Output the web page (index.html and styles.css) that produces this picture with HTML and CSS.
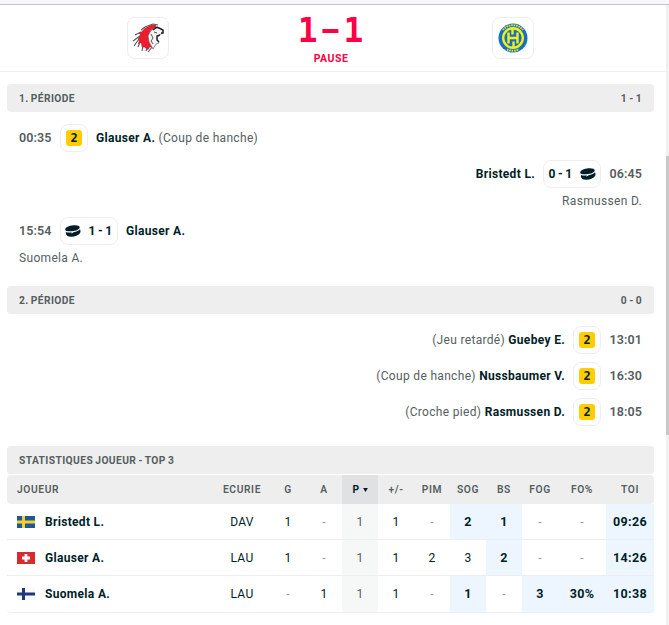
FILE: index.html
```html
<!DOCTYPE html>
<html lang="fr">
<head>
<meta charset="utf-8">
<title>Match</title>
<link rel="stylesheet" href="styles.css">
</head>
<body>
<svg width="0" height="0" class="defs" aria-hidden="true">
  <symbol id="puck" viewBox="0 0 16 12">
    <path d="M.2 4.700C.2 2.200 4 .6 8.500.2c3.600-.3 6.200.6 6.200 2.100 0 2.100-3.700 3.700-8 4C2.800 6.500.2 6 .2 4.700z"/>
    <path d="M.9 7c1.400.6 3.700.6 6 .4l-.8 1.400 2.500-1.600c2.900-.5 5.200-1.600 6.400-3 .8 1.300.6 3.200-.3 4.400-1.500 1.900-4.600 3-8.100 3.200-3.400.2-5-1-5.700-2.700z"/>
  </symbol>
</svg>
<div class="window-edge"></div>
<div class="layout">
<main>
  <header class="match">
    <div class="logo">
      <svg viewBox="0 0 32 32" width="32" height="32">
        <path d="M9 10l4-4 6-3 5 0 0 3-5 2-2 5 1 6 4 7-4-1-2 3-4-3-2 1-1-5-3 1 1-4-1-2 2-3-1-2z" fill="#ed1c2e"/>
        <path d="M9 8l4-3 8-3M3 13l6-3M1 19l7-5M2 24l5-7M6 25l2-5M10 29l1-5M14 29l1-3M21 24l-5 6M23 21l-3 5M21 2l5 1" fill="none" stroke="#555" stroke-width="1.100"/>
        <path d="M18 10l4-4 6 0 3 2v3l-4 2-2 3 2 5-3 1-3 5-4-7-1-6z" fill="#f4f4f4" stroke="#666" stroke-width=".7"/>
        <path d="M21 8l4-3 6 3v3h-2M28 13l-3 1 0 4 2 2" fill="none" stroke="#222" stroke-width="1.400"/>
        <path d="M19 12l2 4-2 3 2 3M22 10l3 1" fill="none" stroke="#555" stroke-width="1"/>
      </svg>
    </div>
    <div class="result">
      <div class="score"><span>1</span><span class="dash">-</span><span>1</span></div>
      <div class="status">PAUSE</div>
    </div>
    <div class="logo">
      <svg viewBox="0 0 32 32" width="32" height="32">
        <circle cx="16" cy="16" r="14.500" fill="#1670c4"/>
        <path d="M6 8a12.800 12.800 0 0 1 20 0M10 27.300a12.800 12.800 0 0 0 12 0" fill="none" stroke="#d8dc3c" stroke-width="2" stroke-dasharray="1.600 .8"/>
        <circle cx="16" cy="16" r="9.800" fill="#1670c4" stroke="#f5ee18" stroke-width="2.400"/>
        <path d="M11.500 10.500v11M20.500 10.500v11M11.500 16h9M15.500 6v6.500M16.500 26v-6.500" fill="none" stroke="#f5ee18" stroke-width="2.400"/>
      </svg>
    </div>
  </header>

  <div class="content">
    <section>
      <h2 class="bar"><span>1. PÉRIODE</span><span>1 - 1</span></h2>
      <div class="events">
        <div class="event">
          <time>00:35</time><span class="box"><i class="penalty">2</i></span>
          <span class="text"><b>Glauser A.</b> (Coup de hanche)</span>
        </div>
        <div class="event away">
          <time>06:45</time><span class="box goal"><svg class="puck"><use href="#puck"/></svg><b>0 - 1</b></span>
          <span class="text"><b>Bristedt L.</b></span>
        </div>
        <div class="assist away">Rasmussen D.</div>
        <div class="event">
          <time>15:54</time><span class="box goal"><svg class="puck"><use href="#puck"/></svg><b>1 - 1</b></span>
          <span class="text"><b>Glauser A.</b></span>
        </div>
        <div class="assist">Suomela A.</div>
      </div>
    </section>

    <section>
      <h2 class="bar"><span>2. PÉRIODE</span><span>0 - 0</span></h2>
      <div class="events">
        <div class="event away">
          <time>13:01</time><span class="box"><i class="penalty">2</i></span>
          <span class="text">(Jeu retardé) <b>Guebey E.</b></span>
        </div>
        <div class="event away">
          <time>16:30</time><span class="box"><i class="penalty">2</i></span>
          <span class="text">(Coup de hanche) <b>Nussbaumer V.</b></span>
        </div>
        <div class="event away">
          <time>18:05</time><span class="box"><i class="penalty">2</i></span>
          <span class="text">(Croche pied) <b>Rasmussen D.</b></span>
        </div>
      </div>
    </section>

    <section>
      <h2 class="bar stats-title"><span>STATISTIQUES JOUEUR - TOP 3</span></h2>
      <div class="stats">
        <div class="row head">
          <span class="player">JOUEUR</span><span>ECURIE</span><span>G</span><span>A</span><span class="sorted">P<svg class="arrow" viewBox="0 0 6 5"><path d="M0 0h6L3 5z"/></svg></span><span>+/-</span><span>PIM</span><span>SOG</span><span>BS</span><span>FOG</span><span>FO%</span><span>TOI</span>
        </div>
        <div class="row">
          <span class="player"><svg class="flag" viewBox="0 0 18 12"><path fill="#1b5a94" d="M0 0h18v12H0z"/><path fill="#f8cd2d" d="M5 0h3v12H5zM0 4.500h18v3H0z"/></svg><b>Bristedt L.</b></span><span>DAV</span><span>1</span><span class="none">-</span><span class="sorted">1</span><span>1</span><span class="none">-</span><span class="best">2</span><span class="best">1</span><span class="none">-</span><span class="none">-</span><span class="best">09:26</span>
        </div>
        <div class="row">
          <span class="player"><svg class="flag" viewBox="0 0 18 12"><path fill="#d92a2f" d="M0 0h18v12H0z"/><path fill="#fff" d="M7.600 2h2.800v2.600H13v2.800h-2.600V10H7.600V7.400H5V4.600h2.600z"/></svg><b>Glauser A.</b></span><span>LAU</span><span>1</span><span class="none">-</span><span class="sorted">1</span><span>1</span><span>2</span><span>3</span><span class="best">2</span><span class="none">-</span><span class="none">-</span><span class="best">14:26</span>
        </div>
        <div class="row">
          <span class="player"><svg class="flag" viewBox="0 0 18 12"><path fill="#f8f8fa" d="M0 0h18v12H0z"/><path fill="#20387a" d="M5 0h3v12H5zM0 4.500h18v3H0z"/></svg><b>Suomela A.</b></span><span>LAU</span><span class="none">-</span><span>1</span><span class="sorted">1</span><span>1</span><span class="none">-</span><span class="best">1</span><span class="none">-</span><span class="best">3</span><span class="best">30%</span><span class="best">10:38</span>
        </div>
      </div>
    </section>
  </div>
</main>
<aside class="scrollbar"><div class="thumb"></div></aside>
</div>
</body>
</html>
```

FILE: styles.css
```css
* { box-sizing: border-box; }
body {
  margin: 0;
  height: 625px;
  overflow: hidden;
  background: #fff;
  color: #001e28;
  font: 12px/18px Roboto, "Liberation Sans", sans-serif;
  letter-spacing: .32px;
}
.defs { display: block; height: 0; }
.window-edge { height: 5px; background: #f6f7f9; border-bottom: 1px solid #c4c4c8; }
.layout { display: flex; height: 620px; }
main { flex: 1; min-width: 0; }
.scrollbar { width: 3px; background: #f1f1f1; padding-top: 151px; }
.thumb { height: 279px; background: #c8c8c8; }

.match {
  display: grid;
  grid-template-columns: 296px 70px 300px;
  height: 67px;
  padding-top: 12px;
  border-bottom: 1px solid #eee;
}
.logo {
  display: grid;
  place-items: center;
  width: 42px;
  height: 42px;
  border: 1px solid #eee;
  border-radius: 8px;
  justify-self: center;
}
.match .logo:last-child { justify-self: start; margin-left: 126px; }
.result { color: #ff0046; text-align: center; white-space: nowrap; }
.score {
  display: flex;
  justify-content: center;
  gap: 7.5px;
  font: bold 33px/27px "DejaVu Sans Mono", monospace;
  letter-spacing: 0;
  margin: 0 0 0 -1px;
}
.dash {
  font-family: "Liberation Sans", sans-serif;
  line-height: 24px;
  transform: scaleX(1.9);
}
.status { font-size: 10.5px; font-weight: 700; line-height: 14px; letter-spacing: .5px; margin-top: 8px; }

.content { padding: 12px 12px 0 7px; }
.bar {
  display: flex;
  justify-content: space-between;
  align-items: center;
  height: 28px;
  margin: 0;
  padding: 1px 12px 0;
  border-radius: 4px;
  background: #eee;
  color: #555e61;
  font-size: 10.25px;
  font-weight: 700;
  line-height: 14px;
  letter-spacing: .4px;
  word-spacing: -.8px;
}
.events { padding: 8px 12px 16px; color: #555e61; }
.event { display: flex; align-items: center; height: 36px; }
.event.away { flex-direction: row-reverse; }
.event time { width: 33px; font-size: 12.5px; font-weight: 600; white-space: nowrap; letter-spacing: .1px; }
.away time { text-align: right; }
.box {
  display: flex;
  align-items: center;
  justify-content: center;
  width: 28px;
  height: 28px;
  margin: 0 8px;
  border: 1px solid #eee;
  border-radius: 8px;
  color: #001e28;
  white-space: nowrap;
}
.goal { width: 58px; gap: 7px; }
.goal b { word-spacing: -1px; }
.away .goal { flex-direction: row-reverse; }
.puck { width: 16px; height: 12px; fill: #001e28; }
.penalty {
  width: 16px;
  height: 16px;
  border-radius: 3px;
  background: #ffcd00;
  font: bold 12px/16px "DejaVu Sans Mono", monospace;
  letter-spacing: 0;
  text-align: center;
}
.text b, .player b { color: #001e28; font-weight: 700; }
.assist { height: 18px; margin-bottom: 3px; }
.assist.away { text-align: right; }

.stats-title { margin-bottom: 1px; }
.row {
  display: grid;
  grid-template-columns: 207px 56px repeat(7, 36px) 36px 48px 48px;
  height: 36px;
  border-bottom: 1px solid #eee;
}
.row:last-child { height: 37px; border-radius: 0 0 4px 4px; }
.row > span { display: flex; align-items: center; justify-content: center; }
.row > .player { justify-content: flex-start; padding-left: 10px; }
.row > .best { background: #edf6ff; font-size: 12.5px; font-weight: 700; }
.row.head {
  height: 29px;
  border: 0;
  border-radius: 4px;
  background: #eee;
  color: #555e61;
  font-size: 10.25px;
  font-weight: 600;
  letter-spacing: .6px;
}
.sorted { background: #f6f8f8; color: #555e61; }
.head .sorted { background: #dfe1e2; color: #001e28; font-weight: 700; }
.arrow { width: 5px; height: 4px; margin-left: 3px; fill: #001e28; }
.flag { width: 18px; height: 12px; margin-right: 10px; }
.none { color: #8f999d; }
```
